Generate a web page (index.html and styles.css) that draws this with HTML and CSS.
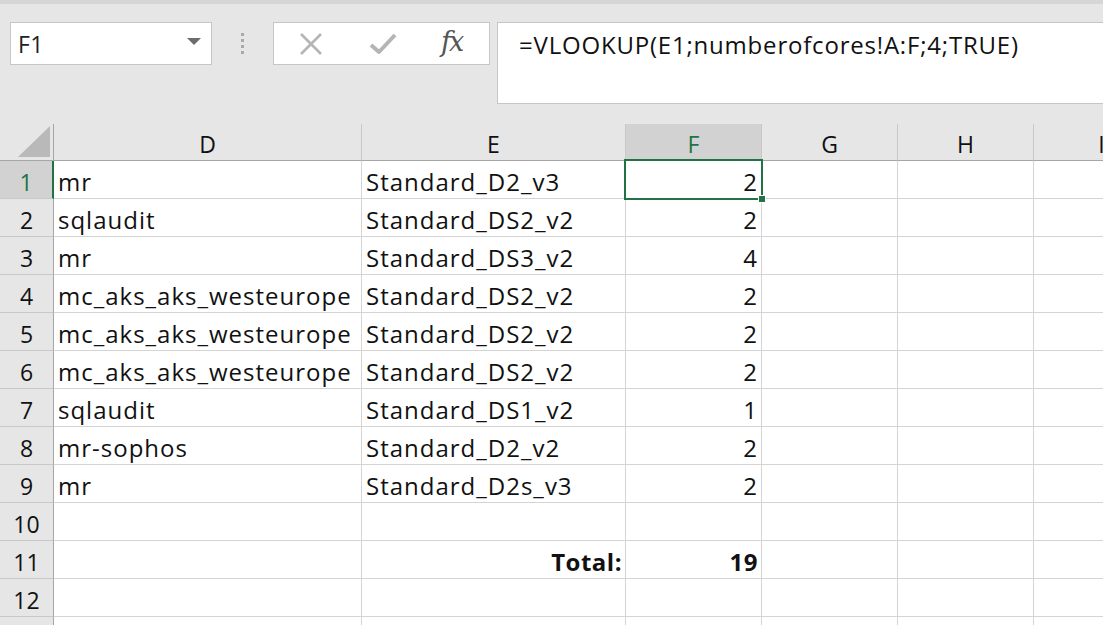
FILE: index.html
```html
<!DOCTYPE html>
<html>
<head>
<meta charset="utf-8">
<link rel="stylesheet" href="styles.css">
</head>
<body>
<div class="app">
  <div class="toolbar">
    <div class="namebox">
      <span class="name">F1</span>
      <svg class="caret" width="14" height="8" viewBox="0 0 14 8"><path d="M0 0 H14 L7 7 Z" fill="#6d6d6d"/></svg>
    </div>
    <div class="grip"><span></span><span></span><span></span><span></span></div>
    <div class="btnbox">
      <svg class="ico" width="24" height="24" viewBox="0 0 24 24"><path d="M2 2 L22 22 M22 2 L2 22" stroke="#b5b5b5" stroke-width="2.6" fill="none"/></svg>
      <svg class="ico" width="28" height="24" viewBox="0 0 28 24"><path d="M2 13 L10 20 L26 3" stroke="#b5b5b5" stroke-width="4" fill="none" stroke-linejoin="round"/></svg>
      <span class="fx">fx</span>
    </div>
    <div class="formula">=VLOOKUP(E1;numberofcores!A:F;4;TRUE)</div>
  </div>
  <div class="sheet">
    <div class="hdr corner"><svg width="32" height="31" viewBox="0 0 32 31"><path d="M32 0 V31 H0 Z" fill="#b9b9b9"/></svg></div>
    <div class="hdr col">D</div>
    <div class="hdr col">E</div>
    <div class="hdr col sel">F</div>
    <div class="hdr col">G</div>
    <div class="hdr col">H</div>
    <div class="hdr col last">I</div>

    <div class="rh rsel">1</div><div class="c">mr</div><div class="c">Standard_D2_v3</div><div class="c num active">2<div class="selbox"><span class="handle"></span></div></div><div class="c"></div><div class="c"></div><div class="c last"></div>
    <div class="rh">2</div><div class="c">sqlaudit</div><div class="c">Standard_DS2_v2</div><div class="c num">2</div><div class="c"></div><div class="c"></div><div class="c last"></div>
    <div class="rh">3</div><div class="c">mr</div><div class="c">Standard_DS3_v2</div><div class="c num">4</div><div class="c"></div><div class="c"></div><div class="c last"></div>
    <div class="rh">4</div><div class="c">mc_aks_aks_westeurope</div><div class="c">Standard_DS2_v2</div><div class="c num">2</div><div class="c"></div><div class="c"></div><div class="c last"></div>
    <div class="rh">5</div><div class="c">mc_aks_aks_westeurope</div><div class="c">Standard_DS2_v2</div><div class="c num">2</div><div class="c"></div><div class="c"></div><div class="c last"></div>
    <div class="rh">6</div><div class="c">mc_aks_aks_westeurope</div><div class="c">Standard_DS2_v2</div><div class="c num">2</div><div class="c"></div><div class="c"></div><div class="c last"></div>
    <div class="rh">7</div><div class="c">sqlaudit</div><div class="c">Standard_DS1_v2</div><div class="c num">1</div><div class="c"></div><div class="c"></div><div class="c last"></div>
    <div class="rh">8</div><div class="c">mr-sophos</div><div class="c">Standard_D2_v2</div><div class="c num">2</div><div class="c"></div><div class="c"></div><div class="c last"></div>
    <div class="rh">9</div><div class="c">mr</div><div class="c">Standard_D2s_v3</div><div class="c num">2</div><div class="c"></div><div class="c"></div><div class="c last"></div>
    <div class="rh">10</div><div class="c"></div><div class="c"></div><div class="c"></div><div class="c"></div><div class="c"></div><div class="c last"></div>
    <div class="rh">11</div><div class="c"></div><div class="c num bold">Total:</div><div class="c num bold">19</div><div class="c"></div><div class="c"></div><div class="c last"></div>
    <div class="rh">12</div><div class="c"></div><div class="c"></div><div class="c"></div><div class="c"></div><div class="c"></div><div class="c last"></div>
    <div class="rh"></div><div class="c"></div><div class="c"></div><div class="c"></div><div class="c"></div><div class="c"></div><div class="c last"></div>
  </div>
</div>
</body>
</html>
```

FILE: styles.css
```css
* { box-sizing: border-box; }
html, body { margin: 0; padding: 0; }
body {
  background: #e6e6e6;
  font-family: "Open Sans", "Noto Sans", sans-serif;
  color: #111;
  overflow: hidden;
}
.app {
  width: 1103px;
  height: 625px;
  overflow: hidden;
  border-top: 4px solid #d6d6d6;
}
.toolbar {
  height: 120px;
  display: flex;
  align-items: flex-start;
  padding: 18px 0 0 10px;
}
.namebox {
  width: 202px;
  height: 43px;
  background: #fff;
  border: 1px solid #c6c6c6;
  display: flex;
  align-items: center;
  justify-content: space-between;
  padding: 0 10px 0 7px;
}
.name { font-size: 23px; color: #222; letter-spacing: 0.5px; }
.caret { margin-top: -3px; }
.grip {
  width: 61px;
  height: 43px;
  display: flex;
  flex-direction: column;
  align-items: center;
  justify-content: center;
  gap: 3px;
}
.grip span { width: 3px; height: 3px; background: #a9a9a9; }
.btnbox {
  width: 217px;
  height: 43px;
  background: #fff;
  border: 1px solid #c6c6c6;
  display: flex;
  align-items: center;
  padding: 0 0 0 25px;
}
.btnbox .ico:first-child { margin-right: 46px; }
.btnbox .ico:nth-child(2) { margin-right: 44px; }
.fx {
  font-family: "DejaVu Serif", "Liberation Serif", serif;
  font-style: italic;
  font-size: 27px;
  color: #555;
  letter-spacing: -2px;
  margin-top: -4px;
}
.formula {
  margin-left: 7px;
  flex: 1;
  height: 82px;
  background: #fff;
  border: 1px solid #c6c6c6;
  border-right: none;
  padding: 5px 0 0 21px;
  font-size: 24px;
  letter-spacing: 0.8px;
  color: #111;
}
.sheet {
  display: grid;
  width: 1170px;
  grid-template-columns: 54px 308px 264px 136px 136px 136px 136px;
  grid-template-rows: 37px repeat(13, 38px);
  background: #fff;
}
.hdr {
  background: #e6e6e6;
  border-bottom: 1px solid #a6a6a6;
  border-right: 1px solid #c8c8c8;
  display: flex;
  align-items: flex-end;
  justify-content: center;
  font-size: 23px;
  color: #111;
}
.hdr.corner {
  justify-content: flex-end;
  align-items: flex-end;
  padding: 0 3px 3px 0;
  border-right: 1px solid #a6a6a6;
}
.hdr.sel { background: #d2d2d2; color: #217346; }
.rh {
  background: #e6e6e6;
  border-right: 1px solid #a6a6a6;
  border-bottom: 1px solid #c8c8c8;
  display: flex;
  align-items: flex-end;
  justify-content: center;
  font-size: 23px;
  color: #111;
}
.rh.rsel {
  background: #d2d2d2;
  color: #217346;
  border-right: 2px solid #217346;
}
.c {
  border-right: 1px solid #d4d4d4;
  border-bottom: 1px solid #d4d4d4;
  font-size: 24px;
  letter-spacing: 1px;
  padding: 0 4px 0 4px;
  display: flex;
  align-items: flex-end;
  white-space: nowrap;
  color: #111;
}
.c.num { justify-content: flex-end; padding-right: 3px; }
.c.bold { font-weight: 700; letter-spacing: 0.5px; }
.c.active { position: relative; }
.selbox {
  position: absolute;
  left: -2px;
  top: -2px;
  width: 139px;
  height: 41px;
  border: 2px solid #217346;
  pointer-events: none;
}
.handle {
  position: absolute;
  right: -5px;
  bottom: -5px;
  width: 8px;
  height: 8px;
  background: #217346;
  border: 1px solid #fff;
}
```
